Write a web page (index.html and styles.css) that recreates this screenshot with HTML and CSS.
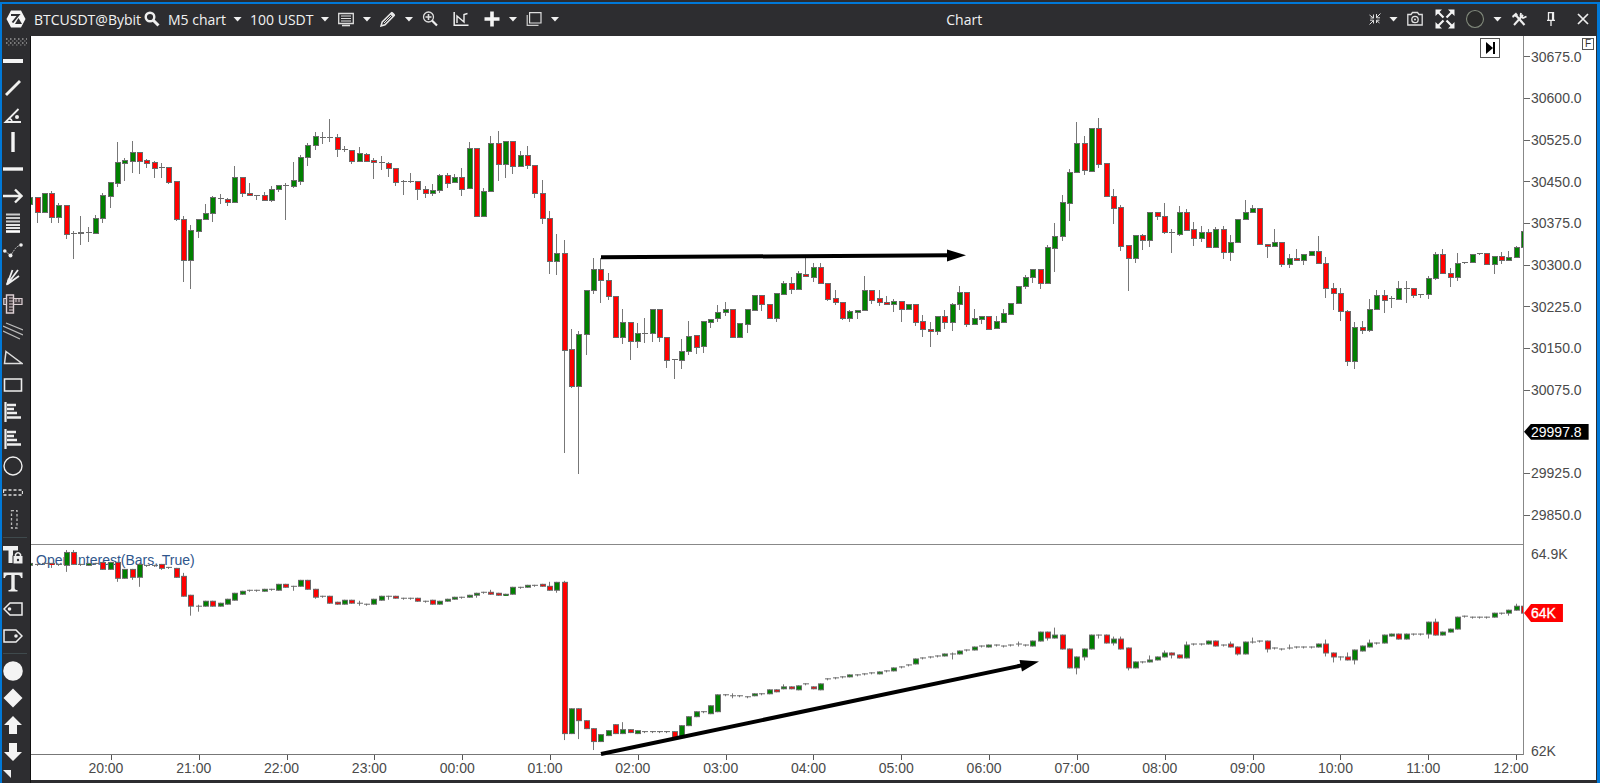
FILE: index.html
```html
<!DOCTYPE html>
<html lang="en">
<head>
<meta charset="utf-8">
<title>Chart</title>
<link rel="stylesheet" href="styles.css">
</head>
<body>
<main class="window">
  <header class="titlebar">
    <div class="instrument">
      <svg class="icon logo" viewBox="0 0 20 18"><path d="M5 0.5H15L19.5 9L15 17.5H5L0.5 9Z" fill="#f4f4f4"/><path d="M5 5H12.5L6.5 12.5" fill="none" stroke="#2d2d30" stroke-width="2"/><path d="M9 14L12.5 8L16 14Z" fill="#2d2d30"/></svg>
      <button class="tool symbol" type="button">BTCUSDT@Bybit
        <svg class="icon" viewBox="0 0 16 16"><circle cx="6" cy="6" r="4.3" fill="none" stroke="#eee" stroke-width="2.4"/><path d="M9 9L14.5 14.5" stroke="#eee" stroke-width="3"/></svg>
      </button>
      <button class="tool text" type="button">M5 chart <i class="caret"></i></button>
      <button class="tool text" type="button">100 USDT <i class="caret"></i></button>
    </div>
    <button class="tool" type="button" aria-label="Template"><svg class="icon" viewBox="0 0 16 16"><path d="M0.7 2.5H15.3V12.5H0.7Z" fill="none" stroke="#ddd" stroke-width="1.3"/><path d="M3 5H13M3 7.5H13M3 10H13" stroke="#ddd" stroke-width="1.2"/><path d="M4 14.5H12" stroke="#ddd" stroke-width="1.6"/></svg><i class="caret"></i></button>
    <button class="tool" type="button" aria-label="Draw"><svg class="icon" viewBox="0 0 16 16"><path d="M1 15L2.2 11L11.5 1.8L14.2 4.5L5 13.8Z" fill="none" stroke="#e8e8e8" stroke-width="1.5"/><path d="M10 3L13 6L15 3.5L12.5 1Z" fill="#e8e8e8"/><path d="M4 12L11.5 4.5" stroke="#e8e8e8"/></svg><i class="caret"></i></button>
    <button class="tool" type="button" aria-label="Zoom"><svg class="icon" viewBox="0 0 16 16"><circle cx="6.5" cy="6" r="5" fill="none" stroke="#ddd" stroke-width="1.3"/><path d="M10 9.5L15 14.5" stroke="#eee" stroke-width="2.2"/><path d="M3.5 6H9.5M6.5 3V9" stroke="#ddd" stroke-width="1.6"/></svg></button>
    <button class="tool apart" type="button" aria-label="Indicators"><svg class="icon" viewBox="0 0 16 16"><path d="M1.2 1V14.3H15.5" fill="none" stroke="#eee" stroke-width="1.5"/><path d="M4 12V5L11 11V3.5L14.5 2.5" fill="none" stroke="#eee" stroke-width="1.4"/></svg></button>
    <button class="tool apart" type="button" aria-label="Add"><svg class="icon" viewBox="0 0 16 16"><path d="M8 0.5V15.5M0.5 8H15.5" stroke="#f4f4f4" stroke-width="3.6"/></svg><i class="caret"></i></button>
    <button class="tool" type="button" aria-label="Windows"><svg class="icon" viewBox="0 0 16 16"><path d="M3.6 1.6H15V12H3.6Z" fill="none" stroke="#ddd" stroke-width="1.2"/><path d="M1.2 4V14.4H12.5" fill="none" stroke="#ccc" stroke-width="1.2"/></svg><i class="caret"></i></button>
    <h1 class="title">Chart</h1>
    <button class="tool" type="button" aria-label="Compress"><svg class="icon small" viewBox="0 0 12 12"><path d="M0.5 2L4.5 5M4.5 1.5V5H1.5M11.5 0.5L7.5 4.5M7.5 1V4.8H11M0.5 11.5L4.5 7.5M4.5 10.5V7.2H1M10.5 10L7.5 7.5M7.5 10V7.2H10.5" fill="none" stroke="#ddd"/></svg><i class="caret"></i></button>
    <button class="tool" type="button" aria-label="Snapshot"><svg class="icon" viewBox="0 0 16 16"><path d="M0.8 3.5H4L5.5 1.5H10.5L12 3.5H15.2V14H0.8Z" fill="none" stroke="#e0e0e0" stroke-width="1.3"/><circle cx="8" cy="8.5" r="3.2" fill="none" stroke="#e0e0e0" stroke-width="1.3"/><circle cx="8" cy="8.5" r="1" fill="#e0e0e0"/></svg></button>
    <button class="tool expand" type="button" aria-label="Full screen"><svg class="icon large" viewBox="0 0 20 20"><path d="M2 2L8.5 8.5M18 2L11.5 8.5M2 18L8.5 11.5M18 18L11.5 11.5" stroke="#f4f4f4" stroke-width="2.2"/><path d="M0.5 0.5H7L0.5 7ZM19.5 0.5H13L19.5 7ZM0.5 19.5H7L0.5 13ZM19.5 19.5H13L19.5 13Z" fill="#f4f4f4"/></svg></button>
    <button class="tool" type="button" aria-label="Link"><svg class="icon large" viewBox="0 0 20 20"><circle cx="10" cy="10" r="8.5" fill="#292929" stroke="#828a7c" stroke-width="1.1"/></svg><i class="caret"></i></button>
    <button class="tool" type="button" aria-label="Settings"><svg class="icon" viewBox="0 0 16 16"><path d="M1 5L5 1.5L7 4L5 6L3.5 5.5L2 7Z" fill="#eee"/><path d="M5.5 5L13.5 14" stroke="#eee" stroke-width="2.2"/><path d="M12 4L3 14" stroke="#eee" stroke-width="2"/><path d="M10 2L9.5 5L12 7L15.5 5.5" fill="none" stroke="#eee" stroke-width="1.8"/></svg></button>
    <button class="tool wide" type="button" aria-label="Pin"><svg class="icon" viewBox="0 0 16 16"><path d="M5.5 9V1.7H10.5V9M4 9.3H12M8 9.5V15" fill="none" stroke="#eee" stroke-width="1.3"/><path d="M9.7 2V9" stroke="#eee" stroke-width="1.6"/></svg></button>
    <button class="tool wide" type="button" aria-label="Close"><svg class="icon" viewBox="0 0 16 16"><path d="M3 3L13 13M13 3L3 13" stroke="#eee" stroke-width="1.7"/></svg></button>
  </header>

  <div class="body">
    <nav class="tools" aria-label="Drawing tools">
      <svg class="grip" viewBox="0 0 22 8"><path d="M1 1H22M1 5H22" stroke="#999" stroke-width="1.4" stroke-dasharray="1.5 2.5"/><path d="M3 3H22M3 7H22" stroke="#888" stroke-dasharray="1.5 2.5"/></svg>
      <button type="button" aria-label="Line"><svg viewBox="0 0 20 20"><path d="M0 10H20" stroke="#f4f4f4" stroke-width="4"/></svg></button>
      <button type="button" aria-label="Trend line"><svg viewBox="0 0 20 20"><path d="M3 17L17 3" stroke="#f0f0ee" stroke-width="2.8"/></svg></button>
      <button type="button" aria-label="Angle"><svg viewBox="0 0 20 20"><path d="M15.5 4L2.5 17H18" fill="none" stroke="#eee" stroke-width="1.8"/><path d="M6 13.5Q9 14 9 17" fill="none" stroke="#eee" stroke-width="1.4"/><circle cx="14" cy="12" r="2" fill="#eee"/></svg></button>
      <button type="button" aria-label="Vertical line"><svg viewBox="0 0 20 20"><path d="M10 0V20" stroke="#f4f4f4" stroke-width="3.4"/></svg></button>
      <button type="button" aria-label="Horizontal line"><svg viewBox="0 0 20 20"><path d="M0 10H20" stroke="#f4f4f4" stroke-width="3.4"/></svg></button>
      <button type="button" aria-label="Arrow"><svg viewBox="0 0 20 20"><path d="M0 10H18M12 3.5L18.5 10L12 16.5" fill="none" stroke="#f0f0ee" stroke-width="2.4"/></svg></button>
      <button type="button" aria-label="Levels"><svg viewBox="0 0 20 20"><path d="M3 1.5H17M3 5H17M3 8.5H17" stroke="#ccc" stroke-width="1.8"/><path d="M3 12H17M3 15H17" stroke="#e4e4e4" stroke-width="2"/><path d="M3 18.5H17" stroke="#fff" stroke-width="2.6"/></svg></button>
      <button type="button" aria-label="Curve"><svg viewBox="0 0 20 20"><path d="M2 11L7.5 15.5L12 9Q14 6 18 5" fill="none" stroke="#bbb" stroke-dasharray="2 1"/><circle cx="1.8" cy="11" r="1.8" fill="#eee"/><circle cx="7.5" cy="15.5" r="2" fill="#eee"/><circle cx="18" cy="5" r="1.8" fill="#eee"/></svg></button>
      <button type="button" aria-label="Fan"><svg viewBox="0 0 20 20"><path d="M4 17.5L9.5 3M4 17.5L15 3M4 17.5L16 9" stroke="#eee" stroke-width="1.8"/><path d="M3 18.5L5 11L9 14Z" fill="#eee"/></svg></button>
      <button type="button" aria-label="Ruler"><svg viewBox="0 0 20 20"><path d="M0.8 4.5H19V10.5H0.8Z" fill="#4a4347" stroke="#ddd0d4" stroke-width="1.2"/><path d="M3.5 1H10.5V19H3.5Z" fill="#3a3336" stroke="#ddd0d4" stroke-width="1.4"/><path d="M6 4H10M6 7H10M6 10H10M6 13H10M6 16H10M13 5V8M16 5V8" stroke="#ddd0d4"/></svg></button>
      <button type="button" aria-label="Channel"><svg viewBox="0 0 20 20"><path d="M3 2L20 9M0 5L20 14M0 10L17 18" stroke="#bbb" stroke-width="1.2"/></svg></button>
      <button type="button" aria-label="Triangle"><svg viewBox="0 0 20 20"><path d="M3 3.5L19 15.5H1.5Z" fill="none" stroke="#ddd" stroke-width="1.5"/></svg></button>
      <button type="button" aria-label="Rectangle"><svg viewBox="0 0 20 20"><path d="M1.5 4H18.5V16H1.5Z" fill="none" stroke="#eee" stroke-width="1.6"/></svg></button>
      <button type="button" aria-label="Volume profile"><svg viewBox="0 0 20 20"><path d="M2.5 0V20" stroke="#eee" stroke-width="2.2"/><path d="M4 3H13M4 7H11M4 11H14M4 15.5H18" stroke="#eee" stroke-width="2.4"/></svg></button>
      <button type="button" aria-label="Fixed profile"><svg viewBox="0 0 20 20"><path d="M2.5 0V20" stroke="#eee" stroke-width="2.2"/><path d="M4 3H13M4 7H11M4 11H14M4 15.5H18" stroke="#eee" stroke-width="2.4"/></svg></button>
      <button type="button" aria-label="Ellipse"><svg viewBox="0 0 20 20"><circle cx="10" cy="10" r="9" fill="none" stroke="#eee" stroke-width="1.4"/></svg></button>
      <button type="button" aria-label="Horizontal band"><svg viewBox="0 0 20 20"><path d="M0.5 7H19.5V12H0.5Z" fill="none" stroke="#ddd" stroke-width="1.3" stroke-dasharray="3 2"/></svg></button>
      <button type="button" aria-label="Vertical band"><svg viewBox="0 0 20 20"><path d="M8.5 0.5H14V18H8.5Z" fill="none" stroke="#bbb" stroke-width="1.3" stroke-dasharray="2.5 2"/></svg></button>
      <hr>
      <button type="button" aria-label="Locked text"><svg viewBox="0 0 20 20"><path d="M0 1H15V5.5H10V18H5.5V5.5H0Z" fill="#f0f0f0"/><path d="M10 10.5H20V19H10Z" fill="#eee" stroke="#2d2d30"/><path d="M12.5 11V9.5Q15 6 17.5 9.5V11" fill="none" stroke="#eee" stroke-width="1.5"/><circle cx="15" cy="15" r="1.2" fill="#2d2d30"/></svg></button>
      <button type="button" aria-label="Text"><svg viewBox="0 0 20 20"><path d="M0.5 0.5H19.5V6H18Q17.5 3 15 3H11.7V16Q11.7 18 14.5 18V19.5H5.5V18Q8.3 18 8.3 16V3H5Q2.5 3 2 6H0.5Z" fill="#eee"/></svg></button>
      <button type="button" aria-label="Left label"><svg viewBox="0 0 20 20"><path d="M1 10L7 4H19V16H7Z" fill="none" stroke="#eee" stroke-width="1.5"/><circle cx="6.5" cy="10" r="1.8" fill="#eee"/></svg></button>
      <button type="button" aria-label="Right label"><svg viewBox="0 0 20 20"><path d="M19 10L13 4H1V16H13Z" fill="none" stroke="#eee" stroke-width="1.5"/><circle cx="13" cy="10" r="1.8" fill="#eee"/></svg></button>
      <hr>
      <button type="button" aria-label="Circle marker"><svg viewBox="0 0 20 20"><circle cx="10" cy="10" r="9.8" fill="#f4f4f4"/></svg></button>
      <button type="button" aria-label="Diamond marker"><svg viewBox="0 0 20 20"><path d="M10 0.5L19.5 10L10 19.5L0.5 10Z" fill="#f4f4f4"/></svg></button>
      <button type="button" aria-label="Up marker"><svg viewBox="0 0 20 20"><path d="M10 1L19 10H14V19H6V10H1Z" fill="#f4f4f4"/></svg></button>
      <button type="button" aria-label="Down marker"><svg viewBox="0 0 20 20"><path d="M10 19L19 10H14V1H6V10H1Z" fill="#f4f4f4"/></svg></button>
      <svg class="corner" viewBox="0 0 8 8"><path d="M0 0H8V8Z" fill="#eee"/></svg>
    </nav>

    <section class="chart">
      <svg class="pane price-pane" viewBox="31 36 1492 508" preserveAspectRatio="none" role="img" aria-label="BTCUSDT price">
        <g id="price-candles"></g>
        <path d="M601 257.3L950 255.3" stroke="#000" stroke-width="4"/>
        <path d="M947 249.5L966 255.3L947 261.5Z"/>
      </svg>
      <ol class="price-axis">
        <li>30675.0</li><li>30600.0</li><li>30525.0</li><li>30450.0</li><li>30375.0</li><li>30300.0</li>
        <li>30225.0</li><li>30150.0</li><li>30075.0</li><li class="last"><span>29997.8</span></li><li>29925.0</li><li>29850.0</li>
      </ol>
      <div class="oi">
        <span class="oi-name">Open Interest(Bars, True)</span>
        <svg class="pane" viewBox="31 545 1492 210" preserveAspectRatio="none" role="img" aria-label="Open interest">
          <g id="oi-candles"></g>
          <path d="M601 755L1024 665.5" stroke="#000" stroke-width="4"/>
          <path d="M1019.5 660.5L1039 662L1022 672Z"/>
        </svg>
      </div>
      <div class="oi-axis"><span>64.9K</span><span class="now">64K</span><span>62K</span></div>
      <ol class="time-axis">
        <li>20:00</li><li>21:00</li><li>22:00</li><li>23:00</li><li>00:00</li><li>01:00</li><li>02:00</li><li>03:00</li><li>04:00</li>
        <li>05:00</li><li>06:00</li><li>07:00</li><li>08:00</li><li>09:00</li><li>10:00</li><li>11:00</li><li>12:00</li>
      </ol>
      <button class="latest" type="button" aria-label="Go to latest"><svg viewBox="0 0 18 18"><path d="M5 3L12 9L5 15Z"/><path d="M13 3V15" stroke="#000" stroke-width="2"/></svg></button>
      <button class="fix" type="button">F</button>
    </section>
  </div>
</main>
<script src="chart.js"></script>
</body>
</html>
```
FILE: styles.css
```css
* { box-sizing: border-box; }
body { margin: 0; background: #2d2d30; font-family: "Liberation Sans", Arial, sans-serif; }
button { background: none; border: 0; padding: 0; margin: 0; color: inherit; font: inherit; }
ol { list-style: none; margin: 0; padding: 0; }
svg { display: block; }

.window { display: flex; flex-direction: column; height: 100vh; border-top: 2px solid #2b2b2e; }
.titlebar { display: flex; align-items: center; gap: 9px; height: 34px; flex: none; padding: 0 6px 2px 4px; border: 2px solid #0078d7; border-width: 2px 3px 0 2px; background: #2d2d30; color: #f2f2f2; font: 14px "Open Sans", "Noto Sans", sans-serif; }
.instrument { display: flex; align-items: center; gap: 8px; }
.tool { display: flex; align-items: center; gap: 8px; white-space: nowrap; height: 24px; }
.tool.symbol { gap: 3px; }
.tool.text { gap: 7px; }
.apart { margin-left: 6px; }
.wide { margin-left: 7px; }
.expand { margin: 0 1px 0 3px; }
.icon { width: 16px; height: 16px; flex: none; }
.icon.logo { width: 20px; height: 18px; }
.icon.small { width: 12px; height: 12px; }
.icon.large { width: 20px; height: 20px; }
.caret { width: 9px; height: 5px; background: #f0f0f0; clip-path: polygon(0 0, 100% 0, 50% 100%); }
.title { flex: 1; margin: 0; text-align: center; font-size: 14px; font-weight: 400; }

.body { display: flex; flex: 1; min-height: 0; border-left: 2px solid #0078d7; border-right: 3px solid #0078d7; background: #2d2d30; }
.tools { width: 29px; flex: none; display: flex; flex-direction: column; align-items: flex-start; padding-left: 1px; border-right: 1px solid #111; }
.tools button { height: 27px; width: 20px; flex: none; display: grid; place-items: center; }
.tools button svg { width: 20px; height: 20px; }
.grip { width: 22px; height: 8px; margin: 2px 0 1px 2px; flex: none; }
.tools hr { width: 24px; height: 1px; flex: none; border: 0; margin: 4px 0 3px; background: #3f4a4d; }
.corner { width: 8px; height: 8px; margin-top: 5px; flex: none; }

.chart { position: relative; flex: 1; min-width: 0; margin: 0 1px 3px 0; display: grid; grid-template: 509fr 210fr 25px / 1fr 73px; background: #fff; color: #4a4a4a; font-size: 14px; }
.pane { width: 100%; height: 100%; min-height: 0; overflow: visible; }
.chart > *, .oi { min-height: 0; min-width: 0; }
.price-pane { border-bottom: 1px solid #888; }
.price-axis { display: grid; grid-template-rows: repeat(12, 1fr); padding: 0 0 9px; border-left: 1px solid #888; }
.price-axis li { display: flex; align-items: center; }
.price-axis li::before { content: ""; width: 6px; height: 1px; background: #666; margin-right: 1px; }
.price-axis .last::before { display: none; }
.last span { padding: 0 7px; line-height: 16px; background: #000; color: #fff; clip-path: polygon(0 50%, 7px 0, 100% 0, 100% 100%, 7px 100%); }
.oi { position: relative; border-bottom: 1px solid #777; }
.oi-name { position: absolute; left: 5px; top: 6px; color: #2f568c; line-height: 18px; }
.oi .pane { position: relative; }
.oi-axis { display: flex; flex-direction: column; align-items: flex-start; border-left: 1px solid #888; line-height: 18px; }
.oi-axis span { padding-left: 7px; }
.oi-axis .now { margin: 41px 0 auto; padding: 0 7px; background: #f00; color: #fff; clip-path: polygon(0 50%, 7px 0, 100% 0, 100% 100%, 7px 100%); -webkit-text-stroke: 0.3px #fff; }
.oi-axis span:last-child { margin-bottom: -5px; }
.time-axis { grid-column: 1 / 3; display: grid; grid-template-columns: repeat(17, 1fr); padding: 0 41px 0 31px; }
.time-axis li { position: relative; text-align: center; line-height: 27px; }
.time-axis li::before { content: ""; position: absolute; left: calc(50% + 5px); top: 0; width: 1px; height: 5px; background: #555; }

.latest { position: absolute; right: 96px; top: 2px; width: 20px; height: 20px; border: 1px solid #555; background: #fff; }
.fix { position: absolute; right: 2px; top: 2px; width: 12px; height: 12px; border: 1px solid #555; background: #fff; color: #333; font-size: 10px; line-height: 10px; }
```
FILE: chart.js
```js
// One bar per entry: kind (g = up, r = down, d = unchanged), body top, body bottom, wick top, wick bottom.
const PRICE = `g197,204,193,214 r197,212,197,222 g193,212 r193,217,191,222 g205,217,203,222 r205,234,205,238 d233,234,231,258 d232,234,216,244 d232,233,227,241 g218,233,215,233
g195,218,193,222 g182,196,182,207 g162,183,142,186 g160,163,158,180 g152,161,141,172 r152,161,152,173 r160,163,159,167 r162,168,161,177 d167,168,163,177 r167,182,167,183
r181,219,181,220 r219,260,216,281 g230,260,225,288 g219,231,219,237 g213,219,204,219 g197,213,196,221 d198,199,194,203 r199,202,198,205 g177,202,166,202 r177,193,177,196
r193,195,183,195 d195,196,195,199 r195,200,192,200 g189,200,186,201 g185,189,185,191 d185,186,183,219 g180,186,162,187 g157,181,155,184 g145,157,143,165 g136,145,132,149
d137,138,132,143 d137,138,119,141 r137,149,134,156 d149,150,146,151 r150,161,150,163 g153,161,147,161 r154,161,153,161 r160,162,158,178 d162,163,156,169 r163,168,162,176
r168,182,168,185 d181,182,180,194 d181,182,173,182 r181,189,181,199 r189,193,186,197 g190,193,184,195 g175,190,174,192 r175,183,173,187 g177,182,174,182 r177,189,168,195
g148,188,142,188 r148,216 g191,216,188,216 g143,191,136,191 r143,164,131,180 g141,164,141,177 r141,166,141,173 g155,166,151,166 r155,165,146,168 r165,193,165,197
r193,218,180,223 r218,261,211,273 g253,261,234,274 r253,350,240,452 r349,386,329,387 g334,386,331,473 g290,334,290,354 g269,290,258,293 r269,280,258,302 r280,296,273,299
r296,337 g322,337,309,343 r322,341,322,359 g333,341,323,347 d333,334,318,342 g309,333,309,341 r309,337,309,341 r337,360,337,367 d359,360,359,378 g351,360,339,368
g336,351,321,354 r335,347,335,353 g321,346,321,352 g319,322,319,327 g312,318,305,321 g309,312,302,315 r309,337 g323,337 g309,324,309,332 g295,310
r295,304,295,310 r304,318 g293,318,293,321 g283,294,281,294 r283,289,277,293 g273,289,271,289 r274,276,257,276 g267,277,263,281 r267,283,263,283 r283,299,283,300
r298,302,290,304 r302,318,302,319 g311,318,310,321 g310,312,310,318 g290,310,276,310 r290,300,290,303 r298,302,290,305 r302,304,296,304 g301,304,299,311 r301,309,301,321
g304,309 r304,322,304,325 r321,329,315,336 r329,331,322,346 g316,331,316,334 r316,322,310,328 g304,322,303,330 g292,304,286,309 r292,324,292,326 g318,324,309,324
g316,319,316,323 r316,329 g321,328,316,328 g313,322,309,322 g303,314 g286,303 g277,286,275,288 g269,277,269,282 r269,283,269,288 g247,283,245,283
g236,248,223,271 g202,236,195,240 g172,203,169,220 g143,172,122,172 r143,170,136,174 g128,171 r128,164,118,167 r163,196 r196,208,189,223 r207,246,205,250
r245,258,245,290 g235,258,235,262 r235,240,234,249 g212,240,212,246 r212,216,212,219 r216,232,203,233 d232,233,229,252 g212,234,206,235 r212,230,209,230 r229,238,222,245
g232,238,226,241 r232,247,229,247 g229,247,227,247 r229,252,226,258 g242,252,235,260 g219,242 g212,219,200,219 g208,212,205,212 r208,244 r244,246,244,257
g242,246,229,246 r242,264,242,266 g258,264,254,267 r258,260,249,260 g254,260,254,264 g251,255 r251,263,236,263 r263,288,257,297 r288,293,283,309 r293,311,288,320
r311,361,310,365 g327,361,322,368 r327,330,321,333 g309,330,299,331 g295,309,290,309 r295,300,290,312 d298,299,296,307 g288,299,281,299 d288,289,281,302 r288,295,288,297
d294,295,294,297 g278,294,276,298 g254,278,252,279 r254,273,249,273 r273,277,268,286 g263,277,253,280 d262,263 g254,262 d253,254 r253,264
g256,264,256,273 r256,260,252,263 g257,260,251,260 g247,257,246,257 g231,247`;

const INTEREST = `g563,565 d564,565 d563,564 r563,564,563,567 d564,565 g552,565,550,571 r552,564,550,564 d564,565 g563,565 d563,564
r562,569 g562,569 r562,578,562,581 g569,578 r569,577,569,579 g564,577,564,586 d565,566 d565,566 r564,568,564,569 d567,568
r568,577 r576,596,573,596 r595,606,595,615 d606,607,605,611 g601,606 r601,606 g603,606 g599,604 g593,600 g591,594
d590,591 d590,591 g589,591 d589,590 g584,590 r584,587 d586,587,586,590 g580,586 r580,589 r589,597,589,598
d596,597 r596,603 r602,604 g600,604 r600,603 d603,604,601,605 d604,605 g599,604 g596,600 d596,597,596,599
r596,598 d598,599 d598,599 r598,601 d601,602 r600,604 g601,604 g599,601 g597,599 d597,598
g595,597 g593,595,593,597 d592,593 r592,594,590,594 r593,595 g594,595 g587,594 d587,588 g585,587 d585,586
r584,586 r586,590,582,590 g582,590,582,592 r582,734,581,740 g709,734 r709,721,709,739 r721,729 r729,742,729,750 g735,742 g731,736
r725,734 g730,734,723,734 r730,733 g731,734 d732,733 d732,733 d732,733 d732,733 r732,738 g726,738
g717,726 g712,717 d712,713 g706,714 g695,712 d695,696 d696,697,694,698 d696,697 d697,698 g694,696
d694,695 g690,694 r690,692 g687,689,685,689 r687,689 g686,690 d684,685 r687,689 g684,690 d679,680
d678,679 d677,678 g675,677 d675,676 d674,675 d673,674 g672,674 d671,672 g668,671 d667,668
d665,666 g659,664 d658,659 d657,658 d656,657 g654,656 d654,655,653,659 g651,654 d650,651 g647,650
d646,647 g645,647 d645,646 d646,647 d645,646 d644,645,642,646 d645,646 g641,646 g632,641 r632,638,632,640
g635,638,628,638 r635,649 r649,668 g657,668,657,674 g649,657,649,660 g635,649 d635,636,635,638 r635,643 g639,643,637,645 r639,649,637,649
r648,668,648,670 g662,668 d662,663 g660,662,656,662 g657,660 g653,657,651,657 r653,655,653,658 r655,658 g645,658,642,658 d644,645
d644,645 g641,644 r641,646 d645,646 r644,647,642,647 r647,654,647,655 g642,654 d642,643,638,643 d641,642 r641,649,641,652
d648,649 d649,650 d648,649,645,649 d647,648 d647,648 d647,648 g644,647 r644,653,640,656 r653,657,653,662 d657,658,657,660
r657,660,653,660 g650,660,650,664 g646,651 g643,647,640,647 d643,644 g635,643 g634,636 r634,639 g634,639 d634,635
d634,635 g622,634,622,638 r622,635,619,635 g632,635 g629,632 g617,629 d616,617 d617,618 d617,618 d617,618
g613,617 d613,614 g610,613,610,615 g606,610,604,610 r606,613`;

const FIRST = 30.2;
const STEP = 7.322;
const RIGHT = 1523;
const FILL = { g: "#008000", r: "#ff0000", d: "#555" };

function bar(x, w, y1, y2, fill) {
  const left = Math.max(x, 31);
  const width = Math.min(x + w, RIGHT) - left;
  return width > 0 ? `<rect x="${left}" y="${y1}" width="${width}" height="${y2 - y1}" fill="${fill}"/>` : "";
}

function draw(id, data) {
  document.getElementById(id).innerHTML = data.trim().split(/\s+/).map((entry, i) => {
    const kind = entry[0];
    const [top, bottom, high = top, low = bottom] = entry.slice(1).split(",").map(Number);
    const x = Math.round(FIRST + STEP * i) - 3;
    let out = bar(x + 2, 1, high, low + 1, "#777") + bar(x, 6, top, bottom + (kind === "d" ? 0 : 1), "#6a6a6a");
    if (kind !== "d") out += bar(x + 1, 4, top + 1, Math.max(bottom, top + 2), FILL[kind]);
    return out;
  }).join("");
}

draw("price-candles", PRICE);
draw("oi-candles", INTEREST);
```
